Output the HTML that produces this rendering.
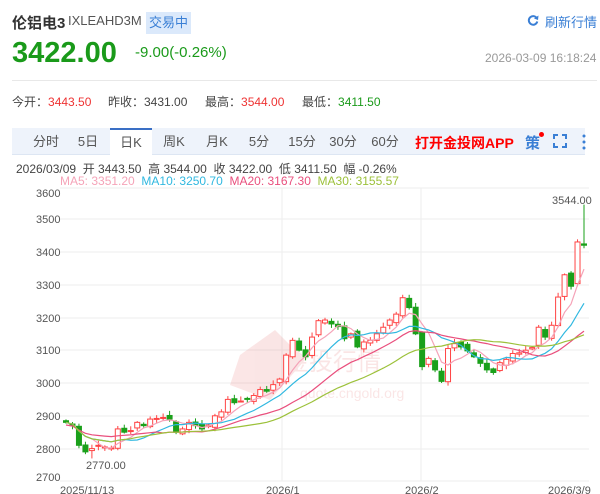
<!DOCTYPE html>
<html><head><meta charset="utf-8"><style>
body{margin:0;width:600px;height:494px;background:#fff;font-family:"Liberation Sans","Noto Sans CJK SC",sans-serif;position:relative;overflow:hidden;color:#333}
.a{position:absolute;white-space:nowrap}
.tab{position:absolute;top:128px;height:27px;line-height:27px;font-size:13px;color:#555;text-align:center}
</style></head><body>
<div class="a" style="left:12px;top:12px;font-size:15px;font-weight:bold;color:#333">伦铝电3</div>
<div class="a" style="left:68px;top:13px;font-size:13px;color:#555">IXLEAHD3M</div>
<div class="a" style="left:146px;top:12px;width:45px;height:22px;background:#dbe9fb;color:#3a7fd5;font-size:13px;text-align:center;line-height:22px">交易中</div>
<svg class="a" style="left:527px;top:14px" width="12" height="12" viewBox="0 0 12 12"><path d="M10 4.5A4.3 4.3 0 1 0 10.3 7.5" fill="none" stroke="#3a7fd5" stroke-width="2"/><path d="M11.5 1.5L11 6 7 4.5z" fill="#3a7fd5"/></svg>
<div class="a" style="left:545px;top:12px;font-size:13px;color:#3a7fd5">刷新行情</div>
<div class="a" style="left:12px;top:37px;font-size:29px;font-weight:bold;color:#1a9a1a">3422.00</div>
<div class="a" style="left:135px;top:44px;font-size:15px;color:#1a9a1a">-9.00(-0.26%)</div>
<div class="a" style="left:485px;top:51px;font-size:12px;color:#999">2026-03-09 16:18:24</div>
<div class="a" style="left:12px;top:80px;width:585px;height:1px;background:#e8e8e8"></div>
<div class="a" style="left:12px;top:93px;font-size:12px;color:#444">今开：<span style="color:#e33">3443.50</span></div>
<div class="a" style="left:108px;top:93px;font-size:12px;color:#444">昨收：3431.00</div>
<div class="a" style="left:205px;top:93px;font-size:12px;color:#444">最高：<span style="color:#e33">3544.00</span></div>
<div class="a" style="left:302px;top:93px;font-size:12px;color:#444">最低：<span style="color:#1a9a1a">3411.50</span></div>
<div class="a" style="left:12px;top:128px;width:573px;height:26px;background:#eef3fb;border-bottom:1px solid #dde6f3"></div>
<div class="tab" style="left:30px;width:32px">分时</div>
<div class="tab" style="left:74px;width:28px">5日</div>
<div class="tab" style="left:110px;width:42px;background:#fff;border-top:2px solid #3a6fc5;top:128px;height:27px;line-height:25px">日K</div>
<div class="tab" style="left:160px;width:28px">周K</div>
<div class="tab" style="left:203px;width:28px">月K</div>
<div class="tab" style="left:245px;width:28px">5分</div>
<div class="tab" style="left:287px;width:30px">15分</div>
<div class="tab" style="left:328px;width:30px">30分</div>
<div class="tab" style="left:370px;width:30px">60分</div>
<div class="a" style="left:415px;top:133px;font-size:14px;font-weight:bold;color:#f00">打开金投网APP</div>
<div class="a" style="left:525px;top:132px;font-size:15px;font-weight:bold;color:#3a7fd5">策</div>
<div class="a" style="left:539px;top:132px;width:5px;height:5px;border-radius:50%;background:#f00"></div>
<svg class="a" style="left:553px;top:134px" width="14" height="14" viewBox="0 0 14 14" fill="none" stroke="#3a7fd5" stroke-width="2"><path d="M1 5V1h4M9 1h4v4M13 9v4H9M5 13H1V9"/></svg>
<svg class="a" style="left:581px;top:134px" width="6" height="16"><circle cx="3" cy="2" r="1.5" fill="#3a7fd5"/><circle cx="3" cy="8" r="1.5" fill="#3a7fd5"/><circle cx="3" cy="14" r="1.5" fill="#3a7fd5"/></svg>
<div class="a" style="left:16px;top:160px;font-size:12px;color:#444">2026/03/09&nbsp; 开 3443.50&nbsp; 高 3544.00&nbsp; 收 3422.00&nbsp; 低 3411.50&nbsp; 幅 -0.26%</div>
<div class="a" style="left:60px;top:174px;font-size:12px"><span style="color:#f5a3b8">MA5: 3351.20</span>&nbsp;&nbsp;<span style="color:#30b8e0">MA10: 3250.70</span>&nbsp;&nbsp;<span style="color:#e94f7d">MA20: 3167.30</span>&nbsp;&nbsp;<span style="color:#9cc13a">MA30: 3155.57</span></div>
<svg class="a" id="ch" style="left:0;top:185px" width="600" height="309" viewBox="0 185 600 309">
<g stroke="#eee" stroke-width="1">
<line x1="60" y1="188" x2="589" y2="188"/><line x1="60" y1="219" x2="589" y2="219"/><line x1="60" y1="252" x2="589" y2="252"/><line x1="60" y1="285" x2="589" y2="285"/><line x1="60" y1="318" x2="589" y2="318"/><line x1="60" y1="350" x2="589" y2="350"/><line x1="60" y1="383" x2="589" y2="383"/><line x1="60" y1="416" x2="589" y2="416"/><line x1="60" y1="449" x2="589" y2="449"/><line x1="60" y1="481" x2="589" y2="481"/>
<line x1="282" y1="188" x2="282" y2="481"/><line x1="421" y1="188" x2="421" y2="481"/>
</g>
<g font-size="11" fill="#555" font-family="Liberation Sans,sans-serif">
<text x="36" y="197">3600</text><text x="36" y="223">3500</text><text x="36" y="256">3400</text><text x="36" y="289">3300</text><text x="36" y="322">3200</text><text x="36" y="354">3100</text><text x="36" y="387">3000</text><text x="36" y="420">2900</text><text x="36" y="453">2800</text><text x="36" y="481">2700</text>
<text x="60" y="494">2025/11/13</text><text x="266" y="494">2026/1</text><text x="405" y="494">2026/2</text><text x="548" y="494">2026/3/9</text>
<text x="86" y="469">2770.00</text><text x="552" y="204">3544.00</text>
</g>
<g opacity="0.12" fill="#d33"><path d="M240 355 L275 330 L305 360 L270 400 L230 385z"/><text x="285" y="370" font-size="24">金投行情</text><text x="300" y="398" font-size="14">quote.cngold.org</text></g>
<g id="g"></g>
</svg>
<script>
var c=[2880,2870,2810,2790,2800,2810,2805,2802,2860,2850,2855,2880,2870,2890,2892,2895,2890,2850,2860,2880,2870,2860,2872,2900,2912,2950,2940,2945,2950,2962,2980,2975,2995,3012,3085,3130,3100,3080,3140,3190,3192,3180,3172,3135,3150,3110,3125,3130,3150,3170,3192,3210,3260,3230,3150,3050,3075,3040,3005,3105,3120,3110,3098,3080,3060,3040,3032,3062,3072,3090,3092,3100,3108,3170,3140,3176,3262,3330,3295,3430,3420];
var n=c.length,x0=66,dx=(584-66)/(n-1);function Y(p){return 383-(p-3000)*0.328}
var s='';for(var i=0;i<n;i++){var o=i?c[i-1]+((i*37)%17-8):2885,cl=c[i],x=x0+i*dx,up=cl>=o,col=up?'#f44':'#1aa01a';var h=Math.max(o,cl)+((i*13)%11)+4,l=Math.min(o,cl)-((i*7)%9)-4;if(i==n-1){h=3544;l=3411}if(i==4)l=2770;
s+='<line x1="'+x+'" x2="'+x+'" y1="'+Y(h)+'" y2="'+Y(l)+'" stroke="'+col+'"/>';var t=Y(Math.max(o,cl)),b=Y(Math.min(o,cl));s+='<rect x="'+(x-2.5)+'" y="'+t+'" width="5" height="'+Math.max(1,b-t)+'" fill="'+(up?'#fff':col)+'" stroke="'+col+'"/>'}
function ma(k,col){var pts=[];for(var i=0;i<n;i++){var a=0,m=0;for(var j=Math.max(0,i-k+1);j<=i;j++){a+=c[j];m++}var v=a/m;if(k==20)v=v*0.6+2860*0.4*(i<15?1:0)+v*0.4*(i<15?0:1);pts.push((x0+i*dx).toFixed(1)+','+Y(v).toFixed(1))}s+='<polyline fill="none" stroke="'+col+'" stroke-width="1.2" points="'+pts.join(' ')+'"/>'}
ma(5,'#f5a3b8');ma(10,'#30b8e0');ma(20,'#e94f7d');ma(30,'#9cc13a');
document.getElementById('g').innerHTML=s;
</script>
</body></html>
